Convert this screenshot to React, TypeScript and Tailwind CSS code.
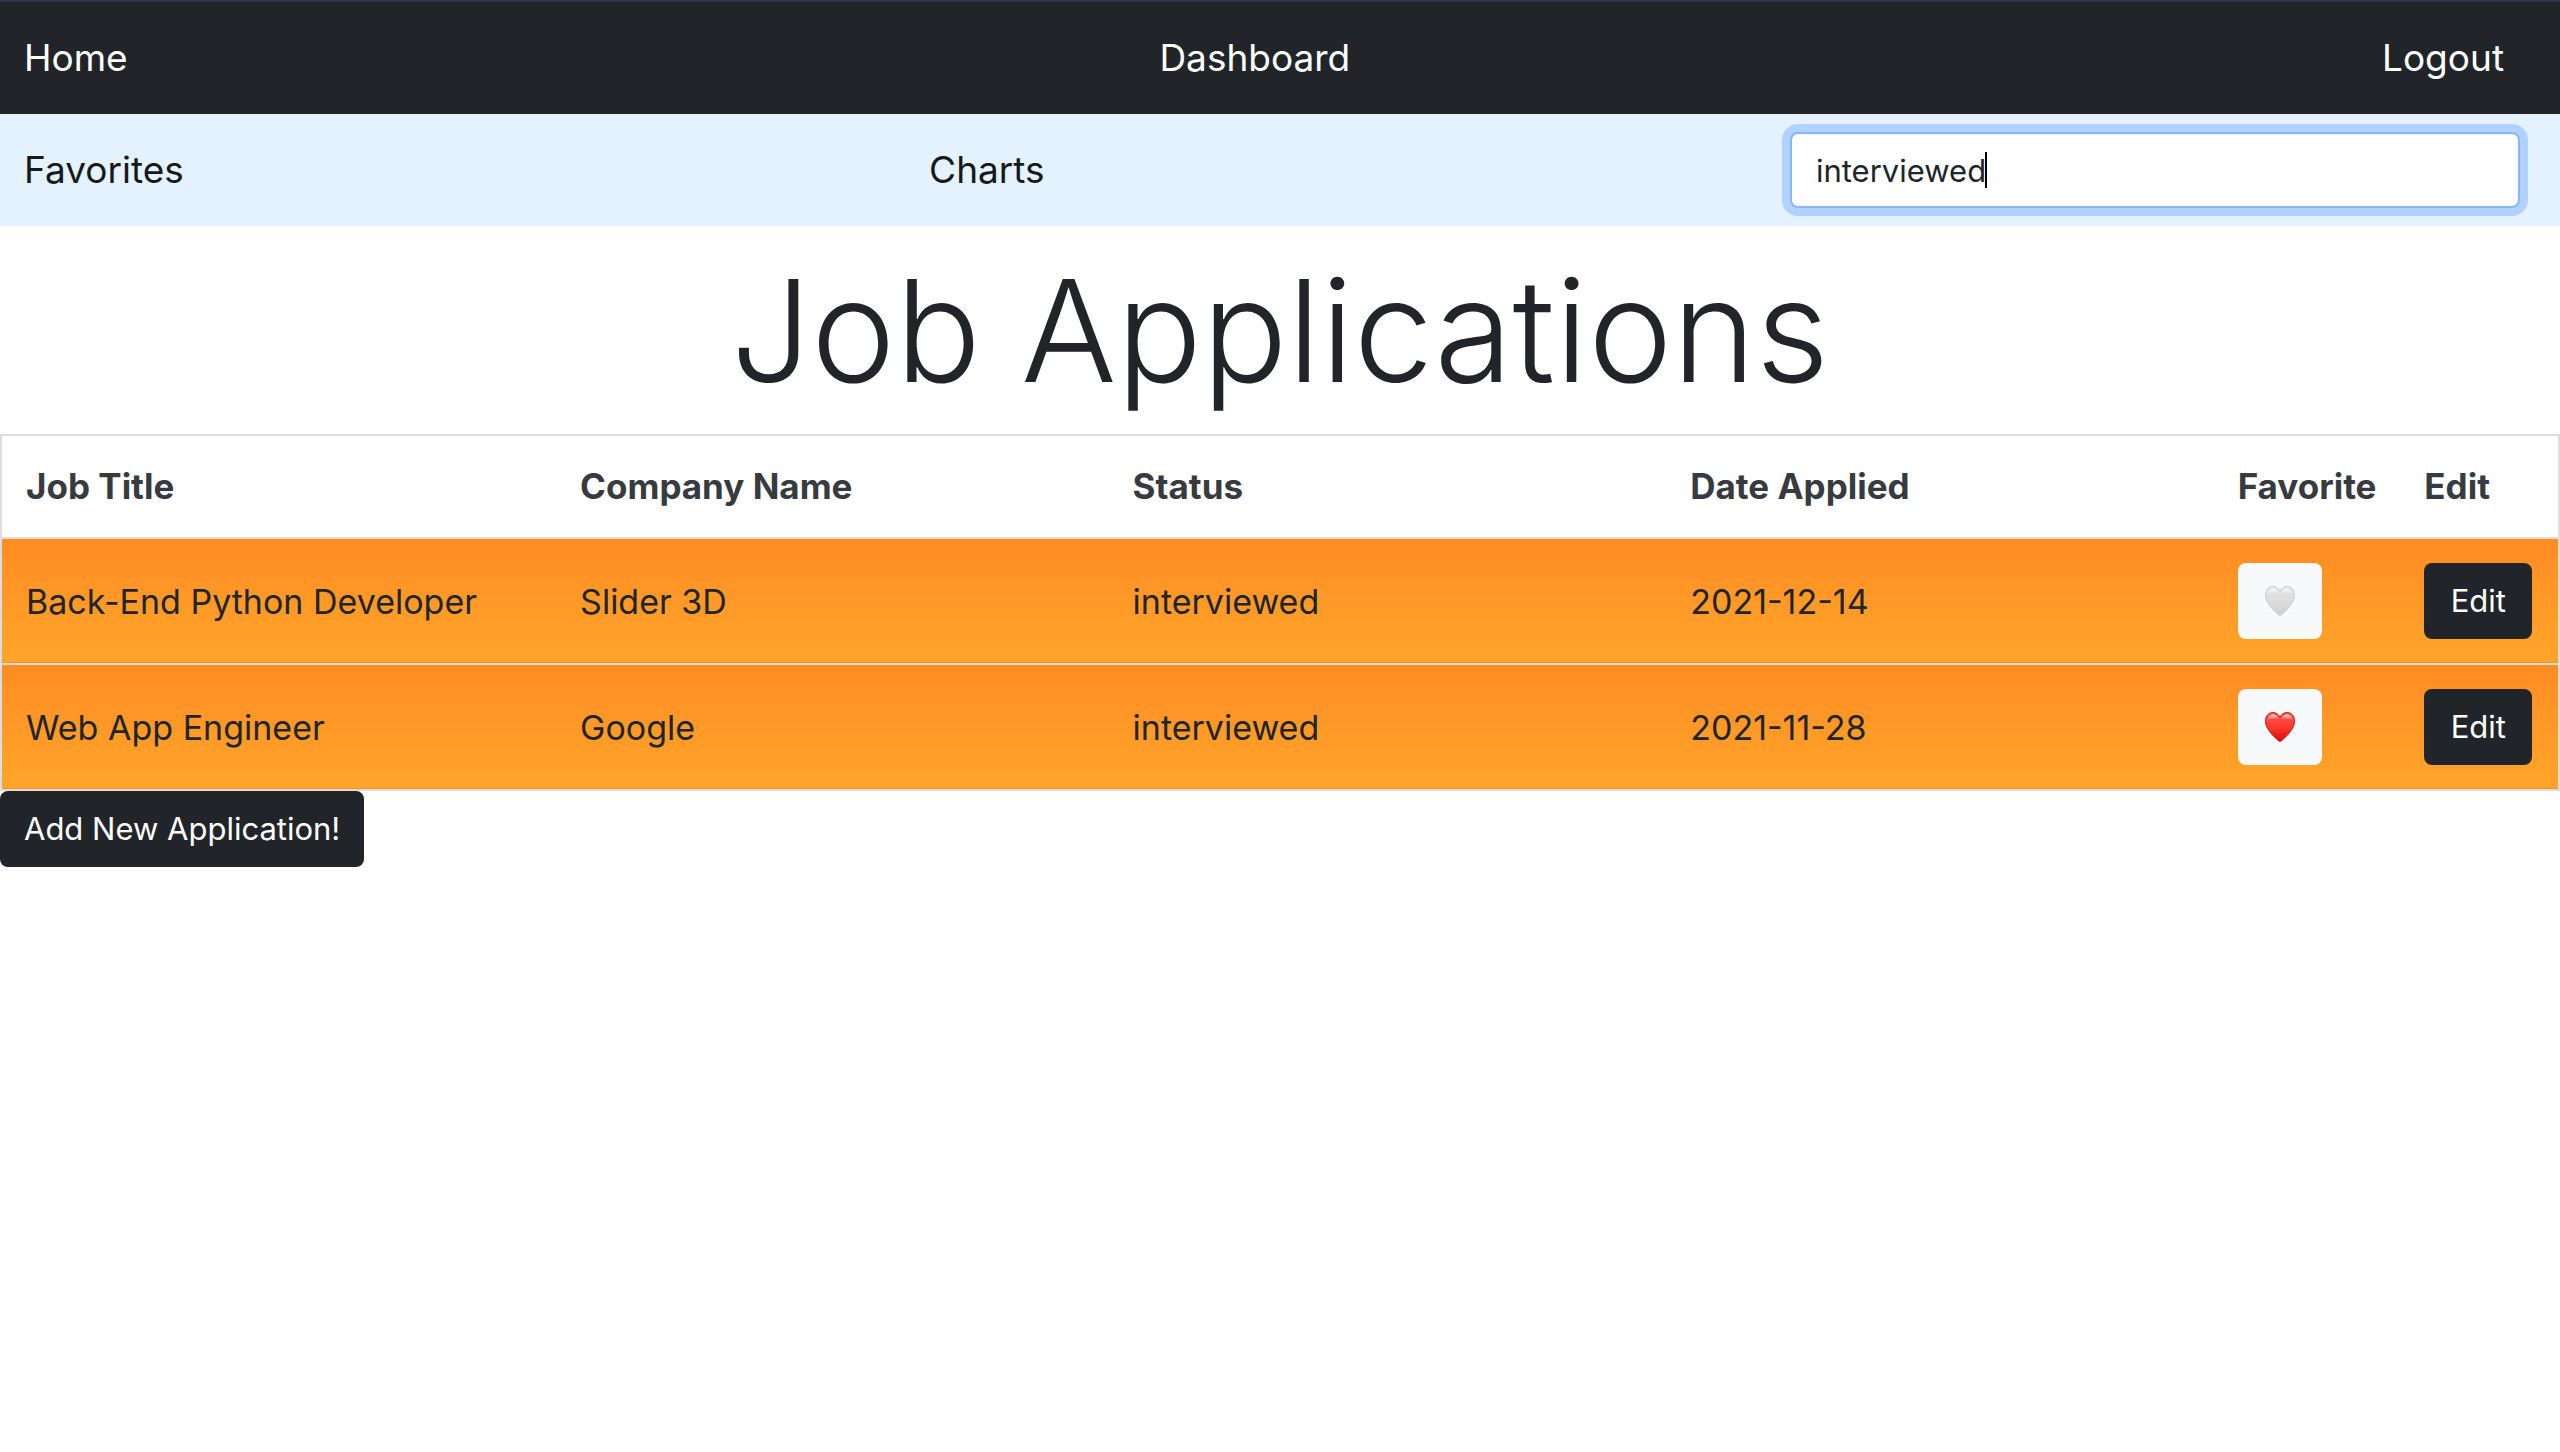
import { useState } from 'react';

type Application = { title: string; company: string; status: string; date: string; favorite: boolean };

const initialApplications: Application[] = [
  { title: 'Back-End Python Developer', company: 'Slider 3D', status: 'interviewed', date: '2021-12-14', favorite: false },
  { title: 'Web App Engineer', company: 'Google', status: 'interviewed', date: '2021-11-28', favorite: true },
];

function Heart({ filled }: { filled: boolean }) {
  const id = filled ? 'heart-red' : 'heart-white';
  const stops = filled ? ['#fb5b50', '#fd3a2e', '#d30d08'] : ['#e4e4e4', '#dcdcdc', '#cfcfcf'];
  const path =
    'M15 29.6C13.6 28.9 .4 18.6 .4 9.2C.4 4 3.6 .5 7.8 .5C11 .5 13.8 2.4 15 5.2C16.2 2.4 19 .5 22.2 .5C26.4 .5 29.6 4 29.6 9.2C29.6 18.6 16.4 28.9 15 29.6Z';
  return (
    <svg viewBox="0 0 30 30" className="size-[30px]" aria-hidden="true">
      <defs>
        <linearGradient id={id} x1="0" y1="0" x2="0" y2="1">
          <stop offset="0" stopColor={stops[0]} />
          <stop offset=".5" stopColor={stops[1]} />
          <stop offset="1" stopColor={stops[2]} />
        </linearGradient>
        <linearGradient id={`${id}-gloss`} x1="0" y1="0" x2="0" y2="1">
          <stop offset="0" stopColor="#fff" stopOpacity=".75" />
          <stop offset="1" stopColor="#fff" stopOpacity="0" />
        </linearGradient>
      </defs>
      <path d={path} fill={`url(#${id})`} stroke={filled ? '#c4120d' : '#cacaca'} strokeWidth=".9" />
      <path d="M2.6 8.6C2.8 4.6 5.2 2.4 8 2.4C10.6 2.4 12.8 4 13.4 7C11 6 5 6 2.6 8.6Z" fill={`url(#${id}-gloss)`} />
      <path d="M27.4 8.6C27.2 4.6 24.8 2.4 22 2.4C19.4 2.4 17.2 4 16.6 7C19 6 25 6 27.4 8.6Z" fill={`url(#${id}-gloss)`} />
    </svg>
  );
}

export default function App() {
  const [query, setQuery] = useState('interviewed');
  const [applications, setApplications] = useState(initialApplications);

  const toggleFavorite = (title: string) =>
    setApplications((list) => list.map((a) => (a.title === title ? { ...a, favorite: !a.favorite } : a)));

  return (
    <div className="min-h-screen bg-white font-['Inter',sans-serif] text-[#212529]">
      <nav className="flex h-[114px] items-center justify-between border-t-2 border-[#323447] bg-[#212529] px-6 text-[37px] text-white">
        <a href="#home" className="mr-8">Home</a>
        <a href="#dashboard" className="mr-8">Dashboard</a>
        <a href="#logout" className="mr-8">Logout</a>
      </nav>
      <nav className="flex h-28 items-center justify-between bg-[#e3f2fd] px-6 text-[37px] text-[#17181a]">
        <a href="#favorites" className="mr-8">Favorites</a>
        <a href="#charts" className="mr-8">Charts</a>
        <form className="w-[29.7%] pr-4" onSubmit={(e) => e.preventDefault()}>
          <div className="relative flex">
            <input
              type="search"
              aria-label="Search applications"
              value={query}
              onChange={(e) => setQuery(e.target.value)}
              className="peer h-[76px] w-full appearance-none rounded-lg border-2 border-[#86b7fe] bg-white px-6 text-[31px] text-[#212529] ring-8 ring-[#b1d1ff] outline-none [&::-webkit-search-cancel-button]:appearance-none"
            />
            {/* resting caret, replaced by the native one on focus */}
            <span className="pointer-events-none absolute top-5 left-[195px] h-9 w-0.5 bg-black peer-focus:hidden" />
          </div>
        </form>
      </nav>

      <h1 className="mb-2 pt-2 text-center text-[142px] leading-[192px] font-light">Job Applications</h1>

      <table className="w-full table-fixed border-collapse border-2 border-[#dcdddf] text-left text-[34px]">
        <colgroup>
          <col className="w-[21.7%]" />
          <col className="w-[21.6%]" />
          <col className="w-[21.8%]" />
          <col className="w-[21.4%]" />
          <col className="w-[7.3%]" />
          <col className="w-[6.2%]" />
        </colgroup>
        <thead>
          <tr className="h-[103px] border-b-2 border-[#dcdddf] text-[35px] text-[#373b3f]">
            {['Job Title', 'Company Name', 'Status', 'Date Applied', 'Favorite', 'Edit'].map((label) => (
              <th key={label} scope="col" className="px-6 font-bold whitespace-nowrap">{label}</th>
            ))}
          </tr>
        </thead>
        <tbody>
          {applications.map((a) => (
            <tr key={a.title} className="h-[126px] border-b-2 border-[#dcdddf] bg-linear-to-b from-[#ff8c24] to-[#ffa529]">
              <td className="px-6 whitespace-nowrap">{a.title}</td>
              <td className="px-6">{a.company}</td>
              <td className="px-6">{a.status}</td>
              <td className="px-6">{a.date}</td>
              <td className="px-6">
                <button
                  type="button"
                  aria-label="Favorite"
                  aria-pressed={a.favorite}
                  onClick={() => toggleFavorite(a.title)}
                  className="flex h-[76px] w-[84px] items-center justify-center rounded-lg bg-[#f8f9fa]"
                >
                  <Heart filled={a.favorite} />
                </button>
              </td>
              <td className="px-6">
                <button type="button" className="flex h-[76px] w-[108px] items-center justify-center rounded-lg bg-[#212529] text-[31px] text-white">
                  Edit
                </button>
              </td>
            </tr>
          ))}
        </tbody>
      </table>
      <button type="button" className="flex h-[76px] items-center rounded-lg bg-[#212529] px-6 text-[31px] text-white">
        Add New Application!
      </button>
    </div>
  );
}
